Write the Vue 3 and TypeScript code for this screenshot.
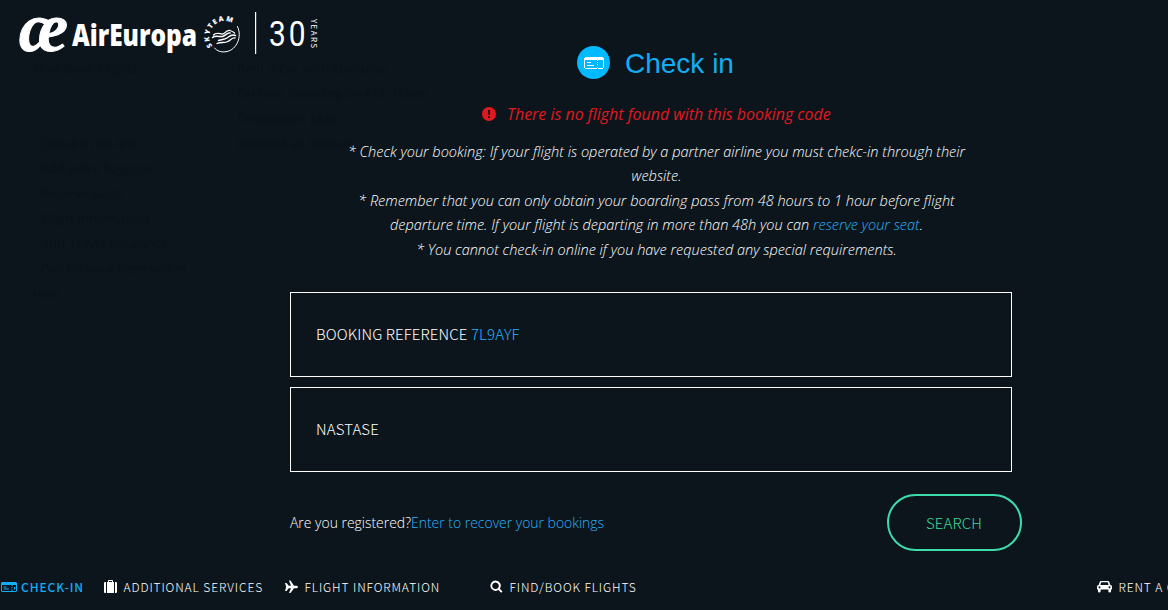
<template>
  <div class="page">
    <div class="backdrop" aria-hidden="true">
      <ul class="ghost main-links">
        <li>Find/Book Flights</li>
        <li class="blank"></li>
        <li class="blank"></li>
        <li v-for="item in manageLinks" :key="item" class="sub">{{ item }}</li>
        <li>now</li>
      </ul>
      <ul class="ghost">
        <li v-for="item in extraLinks" :key="item">{{ item }}</li>
      </ul>
    </div>

    <header class="brand">
      <svg width="330" height="60" viewBox="0 0 330 60" fill="#fff">
        <text class="ae" x="19" y="51" textLength="49" lengthAdjust="spacingAndGlyphs">æ</text>
        <text class="name" x="72" y="45.500" textLength="125" lengthAdjust="spacingAndGlyphs">AirEuropa</text>
        <path id="ring" d="M212.500 46A14 14 0 1 1 237 27" fill="none" />
        <text class="sky">
          <textPath href="#ring" textLength="42">SKYTEAM</textPath>
        </text>
        <g fill="none" stroke="#fff" stroke-linecap="round">
          <path stroke-width="1" d="M237.500 26.500C242.500 37 236.500 49.500 227 51.500C221.500 52.800 217 51 214.500 48" />
          <path stroke-width="1.300" d="M213.500 35C216 32 219 33.500 222 34S226 29.500 230 30.500Q233 31.500 234.500 33" />
          <path stroke-width="1.500" d="M212.500 37.500C216 35 219 37 222.500 36.500S227 32 230 33" />
          <path stroke-width="1.500" d="M218.500 40.500C222 39 224 40 227 38S231.500 33.500 235.500 35.500" />
          <path stroke-width="1.300" d="M217 43.500C221 41.500 224.500 43.500 228 41.500S232 37.500 235 38" />
        </g>
        <rect x="255" y="12" width="1.200" height="42" />
        <text class="thirty" transform="translate(269 46) scale(0.83 1)">30</text>
        <text class="years" transform="translate(311 19) rotate(90)" textLength="29">YEARS</text>
      </svg>
    </header>

    <main class="content">
      <h1 class="title">
        <span class="badge">
          <svg width="20" height="12" viewBox="0 0 20 12" shape-rendering="crispEdges">
            <path :d="ticketPath" fill="#fff" fill-rule="evenodd" />
          </svg>
        </span>
        <span class="title-text">Check in</span>
      </h1>

      <p class="error">
        <svg width="14" height="14" viewBox="0 0 14 14">
          <circle cx="7" cy="7" r="7" fill="#e0191f" />
          <path d="M6 3h2l-.300 5h-1.400zM6.100 9.200h1.800v1.800H6.100z" fill="#0d151b" />
        </svg>
        <span>There is no flight found with this booking code</span>
      </p>

      <div class="notes">
        <p>* Check your booking: If your flight is operated by a partner airline you must chekc-in through their</p>
        <p>website.</p>
        <p>* Remember that you can only obtain your boarding pass from 48 hours to 1 hour before flight</p>
        <p>departure time. If your flight is departing in more than 48h you can <a>reserve your seat</a>.</p>
        <p>* You cannot check-in online if you have requested any special requirements.</p>
      </div>

      <form class="form" @submit.prevent>
        <div class="field">BOOKING REFERENCE&nbsp;<span class="code">{{ bookingCode }}</span></div>
        <div class="field">{{ surname }}</div>
        <div class="actions">
          <p class="registered">Are you registered?<a>Enter to recover your bookings</a></p>
          <button class="search" type="submit">SEARCH</button>
        </div>
      </form>
    </main>

    <nav class="tabs">
      <a
        v-for="tab in tabs"
        :key="tab.id"
        class="tab"
        :class="{ active: tab.id === activeTab }"
        @click="activeTab = tab.id"
      >
        <svg :width="tab.width" height="14" :viewBox="`0 0 ${tab.width} 14`">
          <path :d="tab.path" fill="currentColor" fill-rule="evenodd" />
        </svg>
        <span class="tab-label">{{ tab.label }}</span>
      </a>
    </nav>
  </div>
</template>

<script setup lang="ts">
import { ref } from "vue";

type Tab = {
  id: string;
  label: string;
  width: number;
  path: string;
};

const bookingCode = ref("7L9AYF");
const surname = ref("NASTASE");
const activeTab = ref("checkin");

const manageLinks = [
  "Check-in on-line",
  "Add extra baggage",
  "Reserve seats",
  "Flight information",
  "Add Travel insurance",
  "Pay for your reservation",
];

const extraLinks = [
  "Rent a Car with Europcar",
  "On Line Boarding on AVE Trains",
  "Destination Map",
  "Request an Invoice",
];

const ticketPath =
  "M1 0h18v1h1v10h-1v1h-5v-1h-1v1H1v-1H0V1h1zM1 3v8h12v-1h1v1h5V3h-5v1h-1V3zM13 5h1v1h-1zM13 7h1v1h-1zM3 5h4v1H3zM3 8h7v1H3z";

const tabs: Tab[] = [
  {
    id: "checkin",
    label: "CHECK-IN",
    width: 16,
    path: "M1 2h14l1 1v8l-1 1H1l-1-1V3zM1 5v6h9.500v-1h1v1H15V5h-3.500v1h-1V5zM2.500 6.500h3v1h-3zM2.500 8.500h5.500v1H2.500zM10.500 7h1v1h-1zM10.500 8.700h1v.800h-1zM13 7h1v2.500h-1z",
  },
  {
    id: "services",
    label: "ADDITIONAL SERVICES",
    width: 13,
    path: "M4 2V1q0-1 1-1h3q1 0 1 1v1h1v11H3V2zM5 1v1h3V1zM2 2v11H1q-1 0-1-1V3q0-1 1-1zM11 2h1q1 0 1 1v9q0 1-1 1h-1z",
  },
  {
    id: "flights",
    label: "FLIGHT INFORMATION",
    width: 13,
    path: "M0 3h1.500L3.700 5.800H6L4 .500h1.500L9 5.800h2.500Q13 6 13 7t-1.500 1.200H9L5.500 13H4l2-4.800H3.700L1.500 11H0l1.200-4z",
  },
  {
    id: "book",
    label: "FIND/BOOK FLIGHTS",
    width: 13,
    path: "M5.500.500a5.200 5.200 0 0 1 4.300 8.200l2.700 2.800-1.300 1.300-2.800-2.700A5.200 5.200 0 1 1 5.500.500M5.500 2.500a3.300 3.300 0 1 0 .010 0z",
  },
  {
    id: "car",
    label: "RENT A CAR",
    width: 15,
    path: "M4 1h7q1 0 1.300 1l1 3q1.700.300 1.700 1.500V9.500h-1v2q0 1-1.300 1t-1.300-1v-2H3.600v2q0 1-1.300 1t-1.300-1v-2H0v-3Q0 5.300 1.700 5l1-3Q3 1 4 1M4.200 2.200 3.400 5h8.200l-.800-2.800zM2.500 6.300a1 1 0 1 0 .010 0zM12.500 6.300a1 1 0 1 0 .010 0z",
  },
];
</script>

<style>
body {
  background: #0c151c;
}
</style>

<style scoped>
.page {
  display: grid;
  grid-template-columns: 1168px;
  grid-template-rows: 565px 45px;
  width: 1168px;
  height: 610px;
  overflow: hidden;
  background: #0c151c;
  color: #fff;
  font-family: "Open Sans", "Liberation Sans", sans-serif;
}
.backdrop,
.brand,
.content {
  grid-area: 1 / 1;
}
.backdrop {
  display: grid;
  grid-template-columns: 204px 240px;
  padding: 56px 0 0 33px;
}
.ghost {
  list-style: none;
  margin: 0;
  padding: 0;
  color: #09111a;
  font-size: 13px;
  line-height: 25px;
  white-space: nowrap;
}
.ghost .sub {
  padding-left: 8px;
}
.ghost .blank {
  height: 25px;
}
.brand svg {
  display: block;
  overflow: visible;
}
.ae {
  font: italic bold 70px "Liberation Serif", serif;
  stroke: #fff;
  stroke-width: 1px;
}
.name {
  font: 800 30px "Open Sans", sans-serif;
}
.sky {
  font: 800 7px "Open Sans", sans-serif;
}
.thirty {
  font: 36px Roboto, sans-serif;
  letter-spacing: 3.5px;
}
.years {
  font: 8px "Noto Sans CJK SC", sans-serif;
}
.content {
  padding: 46px 156px 0 290px;
}
.title {
  display: flex;
  align-items: center;
  gap: 15px;
  height: 33px;
  margin: 0 0 0 287px;
  color: #12adf5;
  font: 28px "Liberation Sans", Arial, sans-serif;
}
.title-text {
  padding-top: 2px;
}
.badge {
  display: flex;
  align-items: center;
  justify-content: center;
  width: 33px;
  height: 33px;
  border-radius: 50%;
  background: #00baff;
}
p {
  margin: 0;
}
.error {
  display: flex;
  align-items: center;
  gap: 11px;
  height: 24px;
  margin: 23px 0 0 192px;
  color: #e0191f;
  font-size: 15.95px;
  font-style: italic;
  white-space: nowrap;
}
.notes {
  margin-top: 13px;
  padding-left: 11px;
  color: #fff;
  font-size: 14.53px;
  font-style: italic;
  font-weight: 300;
  line-height: 24.45px;
  text-align: center;
  white-space: nowrap;
}
a {
  color: #2bb2fa;
  cursor: pointer;
}
.form {
  display: flex;
  flex-direction: column;
  gap: 10px;
  margin-top: 30.25px;
}
.field {
  display: flex;
  align-items: center;
  box-sizing: border-box;
  height: 85px;
  padding: 0 0 2px 25px;
  border: 1px solid #fff;
  font-family: "Noto Sans CJK SC", sans-serif;
  font-size: 15px;
  font-weight: 300;
  letter-spacing: 0.12px;
}
.code {
  color: #2bb2fa;
}
.actions {
  display: flex;
  align-items: center;
  justify-content: space-between;
  margin: 12px -10px 0 0;
}
.registered {
  font-size: 13.95px;
  font-weight: 300;
  white-space: nowrap;
}
.search {
  width: 135px;
  height: 57px;
  padding: 0 1px 0 0;
  border: 2px solid #3ddcaa;
  border-radius: 29px;
  background: transparent;
  color: #3dd99a;
  font-family: "Noto Sans CJK SC", sans-serif;
  font-size: 15px;
  font-weight: 300;
  letter-spacing: 0.1px;
}
.tabs {
  display: grid;
  grid-template-columns: 103px 181px 205px 607px 160px;
  align-items: center;
  padding: 0 0 1px 1px;
}
.tab {
  display: flex;
  align-items: center;
  gap: 6.5px;
  color: #fff;
  font-family: "Noto Sans CJK SC", sans-serif;
  font-size: 12px;
  font-weight: 300;
  letter-spacing: 0.9px;
  white-space: nowrap;
}
.tab-label {
  padding-bottom: 1px;
}
.tab.active {
  gap: 4px;
  color: #12adf5;
  font-weight: 500;
}
</style>
